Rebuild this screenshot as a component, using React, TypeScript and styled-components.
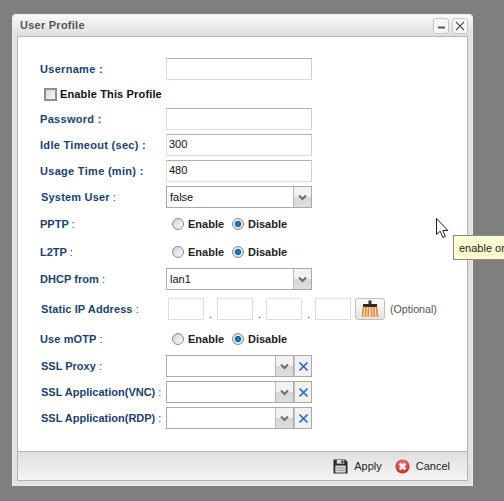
import styled, { createGlobalStyle } from "styled-components";

const GlobalStyle = createGlobalStyle`
    html, body {
        margin: 0;
        height: 100%;
        overflow: hidden;
        background: #7f7f7f;
        font-family: "Liberation Sans", Arial, sans-serif;
    }
`;

const Page = styled.div`
    position: relative;
    width: 504px;
    height: 501px;
    overflow: hidden;
    padding: 14px 0 0 12px;
    box-sizing: border-box;
`;

const Dialog = styled.div`
    width: 461px;
    height: 472px;
    box-sizing: border-box;
    display: flex;
    flex-direction: column;
    background: #e2e2e2;
    border: 1px solid #ececec;
    border-top-color: #f4f4f4;
    border-radius: 4px 4px 0 0;
    padding: 0 4px 4px 4px;
`;

const TitleBar = styled.div`
    height: 21px;
    flex: none;
    margin: 0 -4px;
    padding: 0 4px 0 7px;
    display: flex;
    align-items: center;
    justify-content: space-between;
    background: linear-gradient(#f9f9f9, #dedede);
    border-radius: 4px 4px 0 0;
`;

const Title = styled.span`
    font-size: 11px;
    font-weight: bold;
    color: #555;
    letter-spacing: 0.25px;
    padding-bottom: 2px;
`;

const TitleButtons = styled.div`
    display: flex;
    gap: 3px;
`;

const TitleButton = styled.div`
    width: 14px;
    height: 14px;
    border: 1px solid #c8c8c8;
    border-radius: 3px;
    background: #f6f6f6;
    display: flex;
    align-items: center;
    justify-content: center;
`;

const Body = styled.div`
    flex: 1;
    background: #fff;
    border: 1px solid #b4b4b4;
    display: flex;
    flex-direction: column;
    min-height: 0;
`;

const Form = styled.div`
    flex: 1;
    padding: 21px 0 0 22px;
    display: flex;
    flex-direction: column;
    gap: 4px;
`;

const Row = styled.div<{ $h?: number; $after?: number }>`
    height: ${(p) => p.$h ?? 22}px;
    margin-bottom: ${(p) => p.$after ?? 0}px;
    flex: none;
    display: flex;
    align-items: center;
`;

const Label = styled.div<{ $spacing?: number; $inset?: boolean }>`
    width: 126px;
    flex: none;
    box-sizing: border-box;
    padding-left: ${(p) => (p.$inset ? 1 : 0)}px;
    font-size: 11px;
    font-weight: bold;
    color: #1b3f6f;
    letter-spacing: ${(p) => p.$spacing ?? 0.3}px;
    white-space: nowrap;
`;

const Colon = styled.span`
    font-weight: normal;
    color: #1b3f6f;
`;

const TextInput = styled.input`
    width: 146px;
    height: 22px;
    box-sizing: border-box;
    padding: 0 2px 2px;
    background: #fff;
    border: 1px solid #dcdcdc;
    border-top-color: #b0b0b0;
    border-right-color: #d0d0d0;
    font: 11px "Liberation Sans", Arial, sans-serif;
    color: #111;
    outline: none;
`;

const CheckRow = styled.label`
    margin-left: 4px;
    display: flex;
    align-items: center;
    gap: 3px;
    font-size: 11px;
    font-weight: bold;
    letter-spacing: 0.15px;
    color: #111;
`;

const CheckBox = styled.span`
    width: 13px;
    height: 13px;
    box-sizing: border-box;
    border: 2px solid #8e8e8e;
    background: linear-gradient(135deg, #d8d8d8, #fafafa);
`;

const Combo = styled.div<{ $w: number }>`
    width: ${(p) => p.$w}px;
    height: 22px;
    box-sizing: border-box;
    display: flex;
    align-items: center;
    border: 1px solid #a9a9a9;
    background: #fff;
`;

const ComboValue = styled.span`
    flex: 1;
    padding: 0 0 1px 3px;
    font-size: 11px;
    color: #111;
`;

const ArrowCell = styled.span`
    width: 17px;
    height: 20px;
    flex: none;
    border-left: 1px solid #b8b8b8;
    background: linear-gradient(#f2f2f2 0, #f2f2f2 50%, #d6d6d6 50%, #dedede 100%);
    display: flex;
    align-items: center;
    justify-content: center;
`;

const ClearCell = styled.span`
    width: 18px;
    height: 22px;
    box-sizing: border-box;
    flex: none;
    border: 1px solid #a9a9a9;
    border-left: 1px solid #c4c4c4;
    background: #f1f1f1;
    display: flex;
    align-items: center;
    justify-content: center;
`;

const RadioGroup = styled.div`
    margin-left: 6px;
    display: flex;
    align-items: center;
`;

const RadioLabel = styled.span`
    width: 44px;
    margin-left: 4px;
    font-size: 11px;
    font-weight: bold;
    color: #222;
`;

const Radio = styled.span<{ $on?: boolean }>`
    width: 12px;
    height: 12px;
    box-sizing: border-box;
    border-radius: 50%;
    border: 1px solid #8b8b8b;
    background: ${(p) =>
        p.$on
            ? "radial-gradient(circle at 50% 50%, #2f8cc4 0, #0d5f97 38%, #dfe7ec 50%, #cfd6da 100%)"
            : "linear-gradient(135deg, #d4d4d4, #f8f8f8)"};
`;

const IpGroup = styled.div`
    margin-left: 2px;
    display: flex;
    align-items: center;
`;

const IpInput = styled.input`
    width: 36px;
    height: 22px;
    box-sizing: border-box;
    background: #fff;
    border: 1px solid #dedede;
    outline: none;
`;

const IpDot = styled.span`
    width: 13px;
    text-align: center;
    font-size: 11px;
    color: #333;
    align-self: flex-end;
    line-height: 12px;
`;

const BroomButton = styled.div`
    width: 30px;
    height: 22px;
    margin-left: 4px;
    box-sizing: border-box;
    border: 1px solid #bdbdbd;
    border-radius: 3px;
    background: linear-gradient(#fafafa, #e4e4e4);
    display: flex;
    align-items: center;
    justify-content: center;
`;

const Hint = styled.span`
    margin-left: 5px;
    font-size: 10.7px;
    color: #555;
`;

const Footer = styled.div`
    height: 28px;
    flex: none;
    border-top: 1px solid #b4b4b4;
    background: linear-gradient(#dfdfdf, #f5f5f5);
    display: flex;
    align-items: center;
    justify-content: flex-end;
    padding-right: 17px;
    gap: 13px;
`;

const FooterButton = styled.div`
    display: flex;
    align-items: center;
    gap: 6px;
    font-size: 11px;
    color: #222;
`;

const Tooltip = styled.div`
    position: absolute;
    left: 453px;
    top: 235px;
    width: 70px;
    height: 25px;
    box-sizing: border-box;
    padding: 0 5px;
    display: flex;
    align-items: center;
    white-space: nowrap;
    font-size: 11px;
    color: #222;
    background: #fdfdcf;
    border: 1px solid #888;
`;

const Cursor = styled.svg`
    position: absolute;
    left: 436px;
    top: 218px;
`;

const Chevron = () => (
    <svg width="9" height="7" viewBox="0 0 9 7">
        <path d="M1 1.5 L4.5 5 L8 1.5" fill="none" stroke="#6d6d6d" strokeWidth="2" />
    </svg>
);

const Select = ({ value, width, clear }: { value?: string; width: number; clear?: boolean }) => (
    <>
        <Combo $w={width}>
            <ComboValue>{value}</ComboValue>
            <ArrowCell>
                <Chevron />
            </ArrowCell>
        </Combo>
        {clear && (
            <ClearCell>
                <svg width="11" height="11" viewBox="0 0 11 11">
                    <path d="M1.5 1.5 L9.5 9.5 M9.5 1.5 L1.5 9.5" stroke="#2f63d6" strokeWidth="1.7" />
                </svg>
            </ClearCell>
        )}
    </>
);

const EnableDisable = () => (
    <RadioGroup>
        <Radio />
        <RadioLabel>Enable</RadioLabel>
        <Radio $on />
        <RadioLabel>Disable</RadioLabel>
    </RadioGroup>
);

const Broom = () => (
    <svg width="18" height="18" viewBox="0 0 18 18">
        <rect x="7.5" y="0.5" width="3" height="4" fill="#333" />
        <rect x="2" y="4" width="14" height="3" fill="#2a2a2a" />
        <path
            d="M2.5 7 L1.5 17 M5 7 L4.5 17 M7.5 7 L7.2 17 M10.5 7 L10.8 17 M13 7 L13.5 17 M15.5 7 L16.5 17"
            stroke="#ee8a2c"
            strokeWidth="1.7"
        />
    </svg>
);

const SaveIcon = () => (
    <svg width="15" height="15" viewBox="0 0 16 16">
        <path d="M0.5 0.5 H13 L15.5 3 V15.5 H0.5 Z" fill="#2d2d2d" />
        <rect x="4" y="1" width="8" height="4" fill="#d8d8d8" />
        <rect x="9" y="1.5" width="2" height="3" fill="#2d2d2d" />
        <rect x="2.5" y="7" width="11" height="7.5" fill="#dcdcdc" />
        <path d="M3.5 9.5 H12.5 M3.5 12 H12.5" stroke="#8a8a8a" strokeWidth="1" />
    </svg>
);

const CancelIcon = () => (
    <svg width="15" height="15" viewBox="0 0 16 16">
        <defs>
            <radialGradient id="cancelFill" cx="50%" cy="35%" r="70%">
                <stop offset="0" stopColor="#f2817a" />
                <stop offset="1" stopColor="#c4211d" />
            </radialGradient>
        </defs>
        <circle cx="8" cy="8" r="7.5" fill="url(#cancelFill)" />
        <path d="M5 5 L11 11 M11 5 L5 11" stroke="#fff" strokeWidth="2.6" />
    </svg>
);

export default function App() {
    return (
        <Page>
            <GlobalStyle />
            <Dialog>
                <TitleBar>
                    <Title>User Profile</Title>
                    <TitleButtons>
                        <TitleButton>
                            <svg width="9" height="9" viewBox="0 0 9 9">
                                <rect x="1" y="5.5" width="7" height="2" fill="#555" />
                            </svg>
                        </TitleButton>
                        <TitleButton>
                            <svg width="10" height="10" viewBox="0 0 10 10">
                                <path d="M1 1 L9 9 M9 1 L1 9" stroke="#555" strokeWidth="1.1" />
                            </svg>
                        </TitleButton>
                    </TitleButtons>
                </TitleBar>
                <Body>
                    <Form>
                        <Row>
                            <Label>Username :</Label>
                            <TextInput />
                        </Row>
                        <Row $h={20}>
                            <CheckRow>
                                <CheckBox />
                                Enable This Profile
                            </CheckRow>
                        </Row>
                        <Row>
                            <Label>Password :</Label>
                            <TextInput type="password" />
                        </Row>
                        <Row>
                            <Label>Idle Timeout (sec) :</Label>
                            <TextInput defaultValue="300" />
                        </Row>
                        <Row>
                            <Label>Usage Time (min) :</Label>
                            <TextInput defaultValue="480" />
                        </Row>
                        <Row>
                            <Label $spacing={0.2} $inset>System User <Colon>:</Colon></Label>
                            <Select value="false" width={146} />
                        </Row>
                        <Row $h={24}>
                            <Label $spacing={0}>PPTP <Colon>:</Colon></Label>
                            <EnableDisable />
                        </Row>
                        <Row $h={24}>
                            <Label $spacing={0}>L2TP <Colon>:</Colon></Label>
                            <EnableDisable />
                        </Row>
                        <Row>
                            <Label $spacing={0.05}>DHCP from <Colon>:</Colon></Label>
                            <Select value="lan1" width={146} />
                        </Row>
                        <Row $h={30}>
                            <Label $spacing={0.1} $inset>Static IP Address <Colon>:</Colon></Label>
                            <IpGroup>
                                <IpInput />
                                <IpDot>.</IpDot>
                                <IpInput />
                                <IpDot>.</IpDot>
                                <IpInput />
                                <IpDot>.</IpDot>
                                <IpInput />
                                <BroomButton>
                                    <Broom />
                                </BroomButton>
                                <Hint>(Optional)</Hint>
                            </IpGroup>
                        </Row>
                        <Row $after={1}>
                            <Label $spacing={0.1}>Use mOTP <Colon>:</Colon></Label>
                            <EnableDisable />
                        </Row>
                        <Row>
                            <Label $spacing={0} $inset>SSL Proxy <Colon>:</Colon></Label>
                            <Select width={128} clear />
                        </Row>
                        <Row>
                            <Label $spacing={0} $inset>SSL Application(VNC) <Colon>:</Colon></Label>
                            <Select width={128} clear />
                        </Row>
                        <Row>
                            <Label $spacing={0} $inset>SSL Application(RDP) <Colon>:</Colon></Label>
                            <Select width={128} clear />
                        </Row>
                    </Form>
                    <Footer>
                        <FooterButton>
                            <SaveIcon />
                            Apply
                        </FooterButton>
                        <FooterButton>
                            <CancelIcon />
                            Cancel
                        </FooterButton>
                    </Footer>
                </Body>
            </Dialog>
            <Tooltip>enable or</Tooltip>
            <Cursor width="13" height="21" viewBox="0 0 13 21">
                <path d="M0.5 0.5 V16.5 L4.2 13.2 L6.8 19.5 L9.3 18.4 L6.8 12.5 L11.8 12.5 Z" fill="#fff" stroke="#222" strokeWidth="1" />
            </Cursor>
        </Page>
    );
}
